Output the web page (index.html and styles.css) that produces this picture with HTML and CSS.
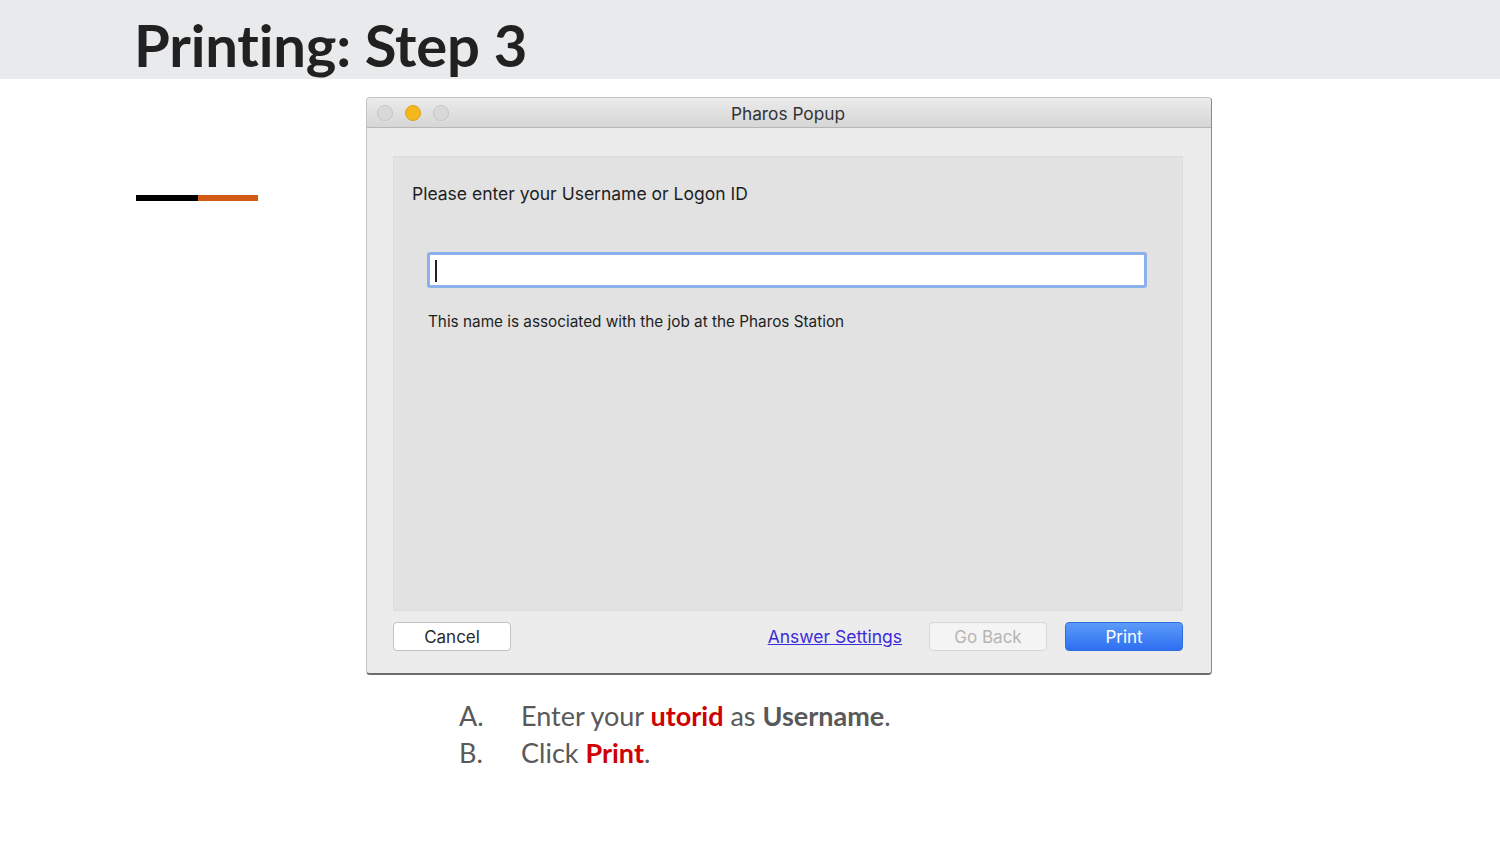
FILE: index.html
```html
<!DOCTYPE html>
<html lang="en">
<head>
<meta charset="UTF-8">
<meta name="viewport" content="width=device-width, initial-scale=1.0">
<title>Printing: Step 3</title>
<link rel="stylesheet" href="styles.css">
</head>
<body>

<div class="header">
  <h1>Printing: Step 3</h1>
</div>

<div class="content">
  <div class="accent">
    <span class="accent-black"></span>
    <span class="accent-orange"></span>
  </div>

  <div class="main">
    <div class="window">
      <div class="titlebar">
        <div class="lights">
          <span class="light"></span>
          <span class="light yellow"></span>
          <span class="light"></span>
        </div>
        <div class="title">Pharos Popup</div>
      </div>
      <div class="window-body">
        <div class="panel">
          <p class="prompt">Please enter your Username or Logon ID</p>
          <div class="field"><span class="caret"></span></div>
          <p class="hint">This name is associated with the job at the Pharos Station</p>
        </div>
        <div class="buttons">
          <button class="btn">Cancel</button>
          <a class="link" href="#">Answer Settings</a>
          <button class="btn disabled">Go Back</button>
          <button class="btn primary">Print</button>
        </div>
      </div>
    </div>

    <ol class="steps">
      <li><span class="marker">A.</span>Enter your <b class="red">utorid</b> as <b>Username</b>.</li>
      <li><span class="marker">B.</span>Click <b class="red">Print</b>.</li>
    </ol>
  </div>
</div>

</body>
</html>
```

FILE: styles.css
```css
body {
  margin: 0;
  background-color: #ffffff;
  font-family: Inter, "Liberation Sans", sans-serif;
}
.header {
  height: 79px;
  background-color: #e9eaec;
  padding-left: 134px;
  box-sizing: border-box;
}
.header h1 {
  margin: 0;
  padding-top: 13px;
  font-family: Lato, sans-serif;
  font-weight: 700;
  font-size: 58px;
  line-height: 64px;
  letter-spacing: -0.2px;
  font-variant-ligatures: none;
  color: #212121;
}
.content {
  display: flex;
  padding-left: 136px;
  padding-top: 18px;
}
.accent {
  display: flex;
  margin-top: 98px;
  height: 6px;
}
.accent-black {
  width: 62px;
  background-color: #000000;
}
.accent-orange {
  width: 60px;
  background-color: #d35a14;
}
.main {
  margin-left: 108px;
}
.window {
  width: 846px;
  height: 578px;
  box-sizing: border-box;
  background-color: #ececec;
  border: 1px solid #c4c4c4;
  border-right-color: #8a8a8a;
  border-bottom: 2px solid #6d6d6d;
  border-radius: 4px;
  display: flex;
  flex-direction: column;
}
.titlebar {
  height: 30px;
  display: flex;
  align-items: center;
  background: linear-gradient(#ebebeb, #d6d6d6);
  border-bottom: 1px solid #b7b7b7;
  border-radius: 4px 4px 0 0;
}
.lights {
  display: flex;
  gap: 12px;
  padding-left: 10px;
}
.light {
  width: 14px;
  height: 14px;
  border-radius: 50%;
  background-color: #d9d9d9;
  border: 1px solid #c6c6c6;
}
.light.yellow {
  background-color: #f2b81c;
  border-color: #dea015;
}
.title {
  flex: 1;
  text-align: center;
  font-size: 17.3px;
  color: #333333;
  margin-right: 84px;
  padding-top: 2px;
}
.window-body {
  flex: 1;
  display: flex;
  flex-direction: column;
  padding: 28px 28px 22px 26px;
}
.panel {
  height: 455px;
  box-sizing: border-box;
  background-color: #e2e2e2;
  border: 1px solid #dcdcdc;
  padding: 26px 35px 0 18px;
}
.prompt {
  margin: 0;
  font-size: 17.5px;
  color: #1e1e1e;
}
.field {
  margin: 48px 0 0 15px;
  height: 36px;
  box-sizing: border-box;
  background-color: #ffffff;
  border: 3px solid #8cb0ea;
  border-radius: 3px;
  padding: 5px 5px;
}
.caret {
  display: block;
  width: 2px;
  height: 22px;
  background-color: #222222;
}
.hint {
  margin: 24px 0 0 16px;
  font-size: 15.3px;
  color: #1e1e1e;
}
.buttons {
  display: flex;
  align-items: center;
  margin-top: 11px;
}
.btn {
  width: 118px;
  height: 29px;
  border: 1px solid #c2c2c2;
  border-radius: 4px;
  background-color: #ffffff;
  font-family: Inter, "Liberation Sans", sans-serif;
  font-size: 17px;
  color: #2a2a2a;
  padding: 0;
}
.btn.disabled {
  background-color: #f4f4f4;
  border-color: #d8d8d8;
  color: #b5b5b5;
  margin-left: 27px;
}
.btn.primary {
  margin-left: 18px;
  background: linear-gradient(#5c9bf9, #2d6ff1);
  border-color: #2f6ce0;
  color: #ffffff;
}
.link {
  margin-left: auto;
  font-size: 17.5px;
  color: #3c2bd9;
  text-decoration: underline;
}
.steps {
  list-style-type: none;
  margin: 22px 0 0 93px;
  padding: 0;
  font-family: Lato, sans-serif;
  font-size: 27px;
  line-height: 37px;
  color: #595959;
}
.steps b {
  font-weight: 700;
}
.marker {
  display: inline-block;
  width: 62px;
}
.red {
  color: #d00000;
}
```
